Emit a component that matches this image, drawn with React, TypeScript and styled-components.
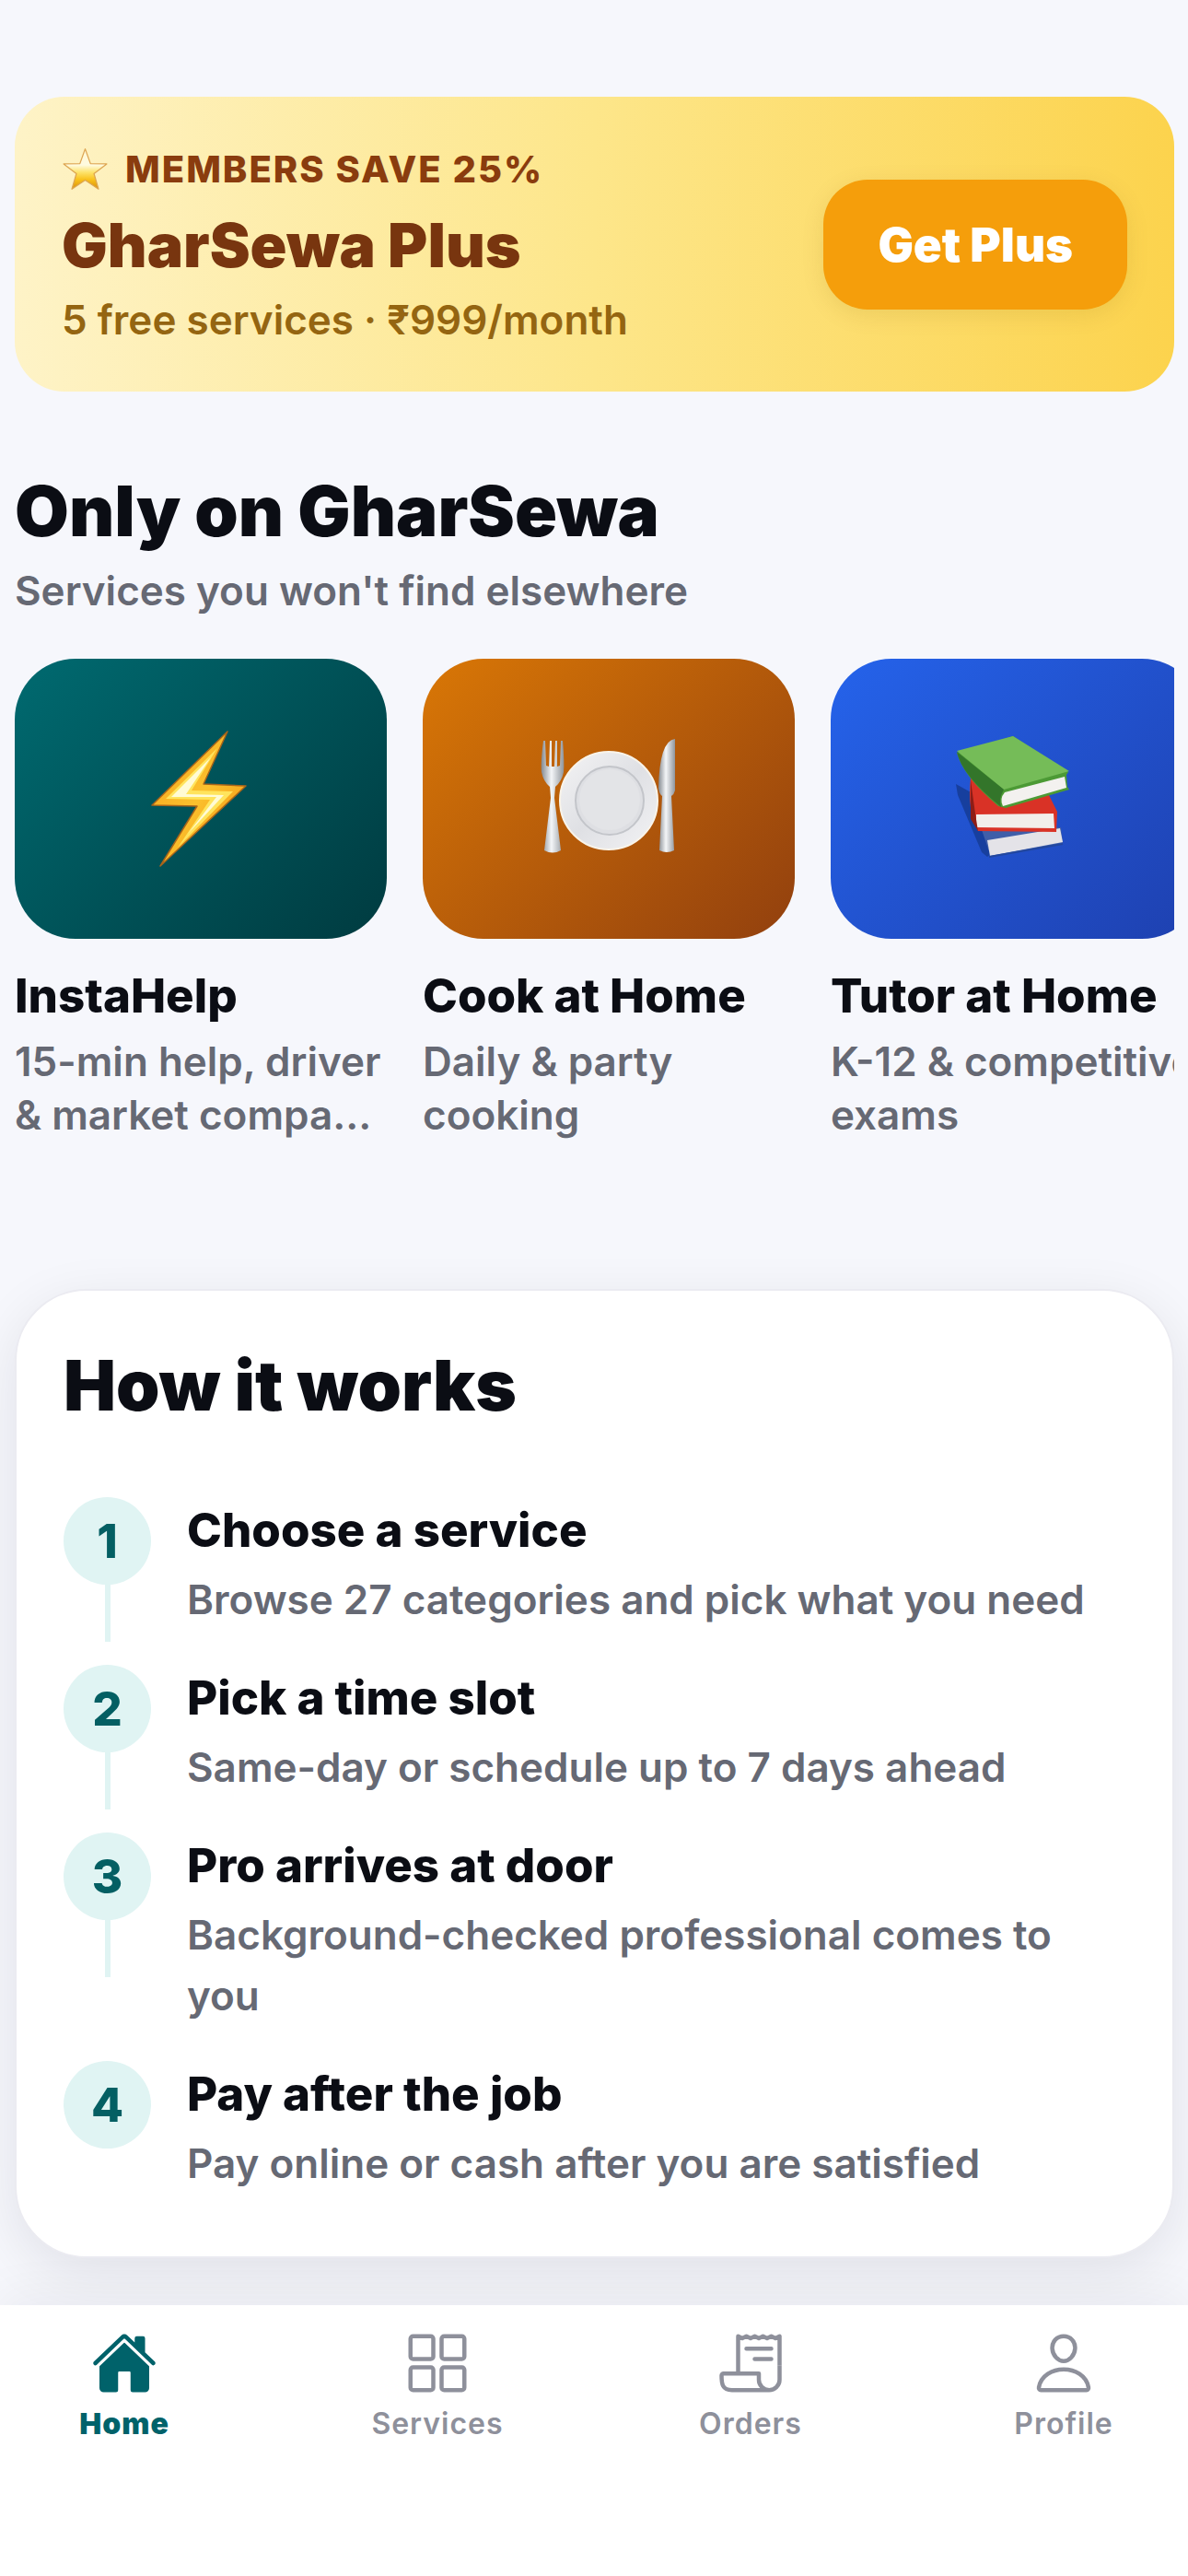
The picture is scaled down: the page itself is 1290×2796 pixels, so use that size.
import React from "react";
import styled, { createGlobalStyle } from "styled-components";
import { IoHome, IoGridOutline, IoReceiptOutline, IoPersonOutline } from "react-icons/io5";

const GlobalStyle = createGlobalStyle`
  *, *::before, *::after { box-sizing: border-box; }
  body {
    margin: 0;
    background: #f6f7fc;
    color: #0b0d14;
    font-family: Inter, "Noto Sans", sans-serif;
  }
  h1, h2, h3, p, ol, ul { margin: 0; padding: 0; }
  ol, ul { list-style: none; }
`;

const Page = styled.div`
  min-height: 100vh;
  display: flex;
  flex-direction: column;
`;

const Content = styled.main`
  flex: 1;
  display: flex;
  flex-direction: column;
  padding: 105px 15px 51px 16px;
`;

const Banner = styled.section`
  display: flex;
  align-items: center;
  justify-content: space-between;
  padding: 48px 51px;
  border-radius: 54px;
  background: linear-gradient(90deg, #fef3c7 0%, #fde68a 50%, #fcd34d 100%);
`;

const BannerText = styled.div`
  display: flex;
  flex-direction: column;
`;

const Eyebrow = styled.p`
  display: flex;
  align-items: center;
  gap: 18px;
  color: #8a3c0e;
  font-size: 40px;
  line-height: 62px;
  font-weight: 800;
  letter-spacing: 2px;
`;

const BannerTitle = styled.h2`
  color: #78350f;
  font-size: 66px;
  line-height: 102px;
  font-weight: 900;
`;

const BannerNote = styled.p`
  color: #946511;
  font-size: 44px;
  line-height: 60px;
  font-weight: 600;
`;

const PlusButton = styled.button`
  border: 0;
  border-radius: 48px;
  padding: 40px 59px;
  background: #f59e0b;
  color: #fff;
  font-family: inherit;
  font-size: 51px;
  line-height: 61px;
  font-weight: 900;
  box-shadow: 0 6px 24px rgba(120, 90, 0, 0.12);
`;

const Exclusive = styled.section`
  margin-top: 84px;
`;

const SectionTitle = styled.h2`
  font-size: 76px;
  line-height: 90px;
  font-weight: 900;
`;

const SectionNote = styled.p`
  margin-top: 12px;
  color: #666974;
  font-size: 44px;
  line-height: 60px;
  font-weight: 600;
`;

const Carousel = styled.ul`
  display: flex;
  gap: 39px;
  margin-top: 44px;
  overflow-x: auto;
  scrollbar-width: none;
`;

const ServiceCard = styled.li`
  flex: 0 0 404px;
`;

const Tile = styled.div<{ $from: string; $to: string }>`
  display: grid;
  place-items: center;
  height: 304px;
  border-radius: 66px;
  background: linear-gradient(135deg, ${(p) => p.$from}, ${(p) => p.$to});
`;

const ServiceName = styled.h3`
  margin-top: 32px;
  font-size: 51px;
  line-height: 60px;
  font-weight: 800;
`;

const ServiceNote = styled.p`
  margin-top: 12px;
  color: #666974;
  font-size: 44px;
  line-height: 58px;
  font-weight: 600;
`;

const StepsPanel = styled.section`
  margin-top: 160px;
  padding: 57px 51px 30px;
  border: 2px solid #ebebf1;
  border-radius: 78px;
  background: #fff;
  box-shadow: 0 16px 60px rgba(15, 15, 35, 0.09);
`;

const StepList = styled.ol`
  margin-top: 77px;
`;

const Step = styled.li`
  display: flex;
  gap: 39px;
`;

const StepMarker = styled.div`
  display: flex;
  flex-direction: column;
  align-items: center;
`;

const StepNumber = styled.span`
  display: grid;
  place-items: center;
  width: 95px;
  height: 95px;
  border-radius: 50%;
  background: #e0f4f3;
  color: #045f63;
  font-size: 51px;
  line-height: 60px;
  font-weight: 800;
`;

const StepLine = styled.span`
  width: 6px;
  height: 62px;
  background: #e0f4f3;
`;

const StepText = styled.div`
  flex: 1;
  padding: 6px 0 38px;
`;

const StepTitle = styled.h3`
  font-size: 51px;
  line-height: 60px;
  font-weight: 800;
`;

const StepNote = styled.p`
  margin-top: 12px;
  color: #666974;
  font-size: 44px;
  line-height: 66px;
  font-weight: 600;
`;

const TabBar = styled.nav`
  position: sticky;
  bottom: 0;
  display: flex;
  justify-content: space-between;
  padding: 27px 39px 146px;
  background: #fff;
  box-shadow: 0 -12px 48px rgba(15, 15, 35, 0.05);
`;

const Tab = styled.a<{ $active?: boolean }>`
  display: flex;
  flex-direction: column;
  align-items: center;
  gap: 10px;
  width: 192px;
  color: ${(p) => (p.$active ? "#00626a" : "#8e909b")};
  font-size: 32px;
  line-height: 40px;
  font-weight: ${(p) => (p.$active ? 900 : 600)};
  letter-spacing: 1px;
  text-decoration: none;
`;

const StarIcon = () => (
  <svg width="51" height="51" viewBox="0 0 48 48" aria-hidden="true">
    <defs>
      <linearGradient id="star" x1="0" y1="0" x2="0" y2="1">
        <stop offset="0" stopColor="#fff6cf" />
        <stop offset="0.4" stopColor="#fffbe0" />
        <stop offset="0.58" stopColor="#fde36c" />
        <stop offset="0.76" stopColor="#f9c21c" />
        <stop offset="1" stopColor="#d98f08" />
      </linearGradient>
    </defs>
    <path
      d="M24 2.500 L29.400 17.500 L46 17.800 L33 27.800 L37.600 43.500 L24 34.300 L10.400 43.500 L15 27.800 L2 17.800 L18.600 17.500 Z"
      fill="url(#star)"
      stroke="#dda552"
      strokeWidth="1.200"
      strokeLinejoin="round"
    />
  </svg>
);

const BoltIcon = () => (
  <svg width="144" height="150" viewBox="0 0 144 150" aria-hidden="true">
    <defs>
      <linearGradient id="bolt" x1="0" y1="0" x2="1" y2="1">
        <stop offset="0" stopColor="#f5a11b" />
        <stop offset="0.5" stopColor="#fbc02d" />
        <stop offset="1" stopColor="#f28c0c" />
      </linearGradient>
    </defs>
    <path d="M101 2 L19 82 L68 83 L28 148 L121 61 L75 59 Z" fill="url(#bolt)" stroke="#a8641a" strokeWidth="1.500" strokeLinejoin="round" />
    <path d="M90 20 L34 75 L82 76 L47 128 L107 67 L62 66 Z" fill="#ffe45c" />
    <path d="M83 30 L40 73 L89 73 L58 113 L97 71 L56 70 Z" fill="#fffbd5" />
  </svg>
);

const PlateIcon = () => (
  <svg width="150" height="130" viewBox="0 2 150 130" aria-hidden="true">
    <defs>
      <linearGradient id="steel" x1="0" y1="0" x2="1" y2="0">
        <stop offset="0" stopColor="#858a90" />
        <stop offset="0.45" stopColor="#f4f6f8" />
        <stop offset="1" stopColor="#8f959c" />
      </linearGradient>
      <linearGradient id="rim" x1="0" y1="0" x2="1" y2="1">
        <stop offset="0" stopColor="#f4f4f5" />
        <stop offset="0.5" stopColor="#dfe0e4" />
        <stop offset="1" stopColor="#f3f3f5" />
      </linearGradient>
    </defs>
    <circle cx="75" cy="69" r="53" fill="url(#rim)" stroke="#f9f4ea" strokeWidth="2" />
    <circle cx="76" cy="69" r="37" fill="#dedfe3" stroke="#c3c5ca" strokeWidth="2" />
    <circle cx="76" cy="68" r="33" fill="#e3e4e7" />
    <path
      d="M4 4 L6 4 L7 31 L10 32 L11 4 L13 4 L13 32 L16 32 L17 4 L19 4 L19 32 L22 31 L23 4 L25 4 Q27 28 26 38 Q24 48 17 54 L16 66 L23 123 Q14 128 5 123 L12 66 L11 54 Q4 48 2 38 Q1 28 4 4 Z"
      fill="url(#steel)"
    />
    <path d="M147 2 Q130 4 129 56 Q130 62 133 64 L130 123 Q138 127 146 123 L143 64 Q146 62 147 58 Z" fill="url(#steel)" />
  </svg>
);

const BooksIcon = () => (
  <svg width="144" height="144" viewBox="0 0 144 144" aria-hidden="true">
    <path d="M6 56 L24 66 L44 132 L40 135 L34 130 L8 68 Z" fill="#173f9e" />
    <path d="M32 100 L98 104 L120 103 L122 120 L44 135 Z" fill="#3f5ea9" />
    <path d="M40 117 L119 104 L122 119 L43 134 Z" fill="#e4e3e8" />
    <path d="M42 135 L122 121" stroke="#22479f" strokeWidth="2" />
    <path d="M22 50 L36 44 L104 62 L116 86 L115 108 L30 107 Q18 84 22 50 Z" fill="#d93226" />
    <path d="M28 89 L112 88 L113 104 L28 103 Z" fill="#f2eeea" />
    <path d="M22 52 L27 88 L30 107 L22 94 Z" fill="#8d1d16" />
    <path d="M7 22 L68 4 L128 43 L126 46 L127 59 L129 62 L60 82 L52 80 Q14 48 7 22 Z" fill="#4c9a35" />
    <path d="M7 20 L68 4 L129 42 L58 62 Z" fill="#75bc58" />
    <path d="M59 65 L124 48 L126 60 L57 80 Q53 72 59 65 Z" fill="#f3f1ef" />
    <path d="M7 21 L58 62 Q52 72 55 81 Q12 46 7 21 Z" fill="#33752a" />
  </svg>
);

const services = [
  {
    name: "InstaHelp",
    note: "15-min help, driver & market compa...",
    from: "#006a70",
    to: "#003b40",
    icon: <BoltIcon />,
  },
  {
    name: "Cook at Home",
    note: "Daily & party cooking",
    from: "#d97706",
    to: "#92400e",
    icon: <PlateIcon />,
  },
  {
    name: "Tutor at Home",
    note: "K-12 & competitive exams",
    from: "#2563eb",
    to: "#1e40af",
    icon: <BooksIcon />,
  },
];

const steps = [
  { title: "Choose a service", note: "Browse 27 categories and pick what you need" },
  { title: "Pick a time slot", note: "Same-day or schedule up to 7 days ahead" },
  { title: "Pro arrives at door", note: "Background-checked professional comes to you" },
  { title: "Pay after the job", note: "Pay online or cash after you are satisfied" },
];

const tabs = [
  { label: "Home", Icon: IoHome, active: true },
  { label: "Services", Icon: IoGridOutline },
  { label: "Orders", Icon: IoReceiptOutline },
  { label: "Profile", Icon: IoPersonOutline },
];

export default function App() {
  return (
    <Page>
      <GlobalStyle />
      <Content>
        <Banner>
          <BannerText>
            <Eyebrow>
              <StarIcon />
              MEMBERS SAVE 25%
            </Eyebrow>
            <BannerTitle>GharSewa Plus</BannerTitle>
            <BannerNote>5 free services · ₹999/month</BannerNote>
          </BannerText>
          <PlusButton type="button">Get Plus</PlusButton>
        </Banner>

        <Exclusive>
          <SectionTitle>Only on GharSewa</SectionTitle>
          <SectionNote>Services you won't find elsewhere</SectionNote>
          <Carousel>
            {services.map((s) => (
              <ServiceCard key={s.name}>
                <Tile $from={s.from} $to={s.to}>
                  {s.icon}
                </Tile>
                <ServiceName>{s.name}</ServiceName>
                <ServiceNote>{s.note}</ServiceNote>
              </ServiceCard>
            ))}
          </Carousel>
        </Exclusive>

        <StepsPanel>
          <SectionTitle>How it works</SectionTitle>
          <StepList>
            {steps.map((step, i) => (
              <Step key={step.title}>
                <StepMarker>
                  <StepNumber>{i + 1}</StepNumber>
                  {i < steps.length - 1 && <StepLine />}
                </StepMarker>
                <StepText>
                  <StepTitle>{step.title}</StepTitle>
                  <StepNote>{step.note}</StepNote>
                </StepText>
              </Step>
            ))}
          </StepList>
        </StepsPanel>
      </Content>

      <TabBar>
        {tabs.map(({ label, Icon, active }) => (
          <Tab key={label} href="#" $active={active}>
            <Icon size={72} aria-hidden="true" />
            {label}
          </Tab>
        ))}
      </TabBar>
    </Page>
  );
}
